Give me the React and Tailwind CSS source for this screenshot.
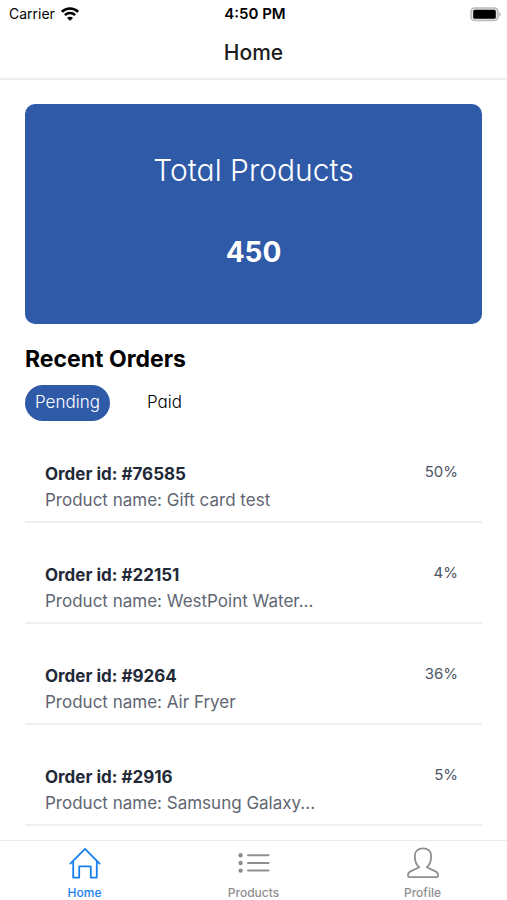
import { useState } from "react";

const orders = [
  { id: "76585", product: "Gift card test", percent: 50 },
  { id: "22151", product: "WestPoint Water...", percent: 4 },
  { id: "9264", product: "Air Fryer", percent: 36 },
  { id: "2916", product: "Samsung Galaxy...", percent: 5 }
];

function WifiIcon() {
  return (
    <svg viewBox="0 0 18 14" className="h-[14px] w-[18px]" fill="none" stroke="currentColor" strokeWidth="2.6" aria-hidden="true">
      <path d="M.9 4.8a11.6 11.6 0 0 1 16.2 0" />
      <path d="M3.9 8.1a7.3 7.3 0 0 1 10.2 0" />
      <path d="M9 13.8 6 10.9a4.2 4.2 0 0 1 6 0z" fill="currentColor" stroke="none" />
    </svg>
  );
}

function BatteryIcon() {
  return (
    <svg viewBox="0 0 31 15" className="h-[15px] w-[31px]" aria-hidden="true">
      <rect x="1" y="1" width="27" height="12.5" rx="3.6" fill="#e4e4e4" stroke="#bcbcbc" strokeWidth="1.6" />
      <rect x="3.2" y="2.8" width="22.6" height="9" rx="1.6" fill="#000" />
      <path d="M29.4 5c1.6.7 1.6 3.9 0 4.6z" fill="#a8a8a8" />
    </svg>
  );
}

function HomeIcon() {
  return (
    <svg viewBox="0 0 32 32" className="size-8" fill="none" stroke="currentColor" strokeWidth="1.8" strokeLinejoin="round" strokeLinecap="round" aria-hidden="true">
      <path d="M1.4 16.6 16 1.9l14.6 14.7" />
      <path d="M4.2 14.4v16.2h6V19.4h11.6v11.2h6V14.4" />
    </svg>
  );
}

function ListIcon() {
  return (
    <svg viewBox="0 0 32 32" className="size-8" aria-hidden="true">
      <g fill="currentColor">
        <circle cx="2.6" cy="8.3" r="2.2" />
        <circle cx="2.6" cy="16" r="2.2" />
        <circle cx="2.6" cy="23.6" r="2.2" />
      </g>
      <path d="M10 8.3h20.5M10 16h20.5M10 23.6h20.5" stroke="currentColor" strokeWidth="2" strokeLinecap="round" />
    </svg>
  );
}

function ProfileIcon() {
  return (
    <svg viewBox="0 0 32 32" className="size-8" fill="none" stroke="currentColor" strokeWidth="1.8" strokeLinejoin="round" aria-hidden="true">
      <path d="M16 1.4c-5 0-8.2 3-8.2 7.4 0 5 1.4 9.2 4.4 11.4L3 24.6c-1.6.8-2.1 1.8-2.1 4 0 1.100.4 1.500 1.400 1.500h27.400c1 0 1.400-.4 1.400-1.500 0-2.200-.5-3.200-2.100-4l-9.200-4.400c3-2.200 4.400-6.400 4.400-11.400 0-4.400-3.200-7.400-8.200-7.400z" />
    </svg>
  );
}

const tabs = [
  { name: "Home", Icon: HomeIcon },
  { name: "Products", Icon: ListIcon },
  { name: "Profile", Icon: ProfileIcon }
];

function StatusBar() {
  return (
    <div className="grid h-7 grid-cols-3 items-center pl-[9px] pr-[6px] text-sm text-black">
      <div className="flex items-center gap-[6px]">
        <span>Carrier</span>
        <WifiIcon />
      </div>
      <span className="text-center text-[15px] font-semibold">4:50 PM</span>
      <div className="flex justify-end">
        <BatteryIcon />
      </div>
    </div>
  );
}

function OrderRow({ order }) {
  return (
    <li className="flex items-start justify-between border-b-2 border-[#eeeff0] pt-[39px] pr-6 pb-2 pl-5">
      <div>
        <h3 className="text-[17px] leading-[26px] font-bold text-[#1f2937]">Order id: #{order.id}</h3>
        <p className="text-[17px] leading-[26px] text-[#5f6673]">Product name: {order.product}</p>
      </div>
      <span className="text-[15px] leading-[22px] text-[#4b5563]">{order.percent}%</span>
    </li>
  );
}

export default function App() {
  const [filter, setFilter] = useState("Pending");
  const [activeTab, setActiveTab] = useState("Home");

  return (
    <div className="flex h-screen flex-col bg-white font-['Inter','Liberation_Sans',sans-serif]">
      <StatusBar />
      <header className="flex h-[52px] items-center justify-center border-b-2 border-[#eeeeee]">
        <h1 className="text-[21px] font-medium text-[#1c1c1e]">Home</h1>
      </header>

      <main className="min-h-0 flex-1 overflow-hidden px-[25px] pt-6">
        <section className="flex flex-col items-center gap-[46px] rounded-[10px] bg-[#2f5aa8] pt-[48px] pb-[54px] text-white [font-feature-settings:'cv11']">
          <h2 className="text-[30px] leading-9 font-light">Total Products</h2>
          <p className="text-[28px] leading-9 font-bold">450</p>
        </section>

        <h2 className="mt-[19px] text-[23px] leading-8 font-bold text-black">Recent Orders</h2>
        <div className="mt-[10px] flex gap-[27px] [font-feature-settings:'cv11']">
          {["Pending", "Paid"].map((name) => (
            <button
              key={name}
              type="button"
              onClick={() => setFilter(name)}
              className={`h-9 rounded-full px-[10px] text-[17px] font-light ${
                filter === name ? "bg-[#2f5aa8] text-white" : "text-black"
              }`}
            >
              {name}
            </button>
          ))}
        </div>

        <ul className="mt-px">
          {orders.map((order) => (
            <OrderRow key={order.id} order={order} />
          ))}
        </ul>
      </main>

      <nav className="grid h-[60px] shrink-0 grid-cols-3 border-t border-[#ebebeb]">
        {tabs.map(({ name, Icon }) => (
          <button
            key={name}
            type="button"
            onClick={() => setActiveTab(name)}
            className={`flex flex-col items-center gap-[6px] pt-[6px] text-xs font-medium ${
              activeTab === name ? "text-[#1a7fee]" : "text-[#8e8e8f]"
            }`}
          >
            <Icon />
            {name}
          </button>
        ))}
      </nav>
    </div>
  );
}
